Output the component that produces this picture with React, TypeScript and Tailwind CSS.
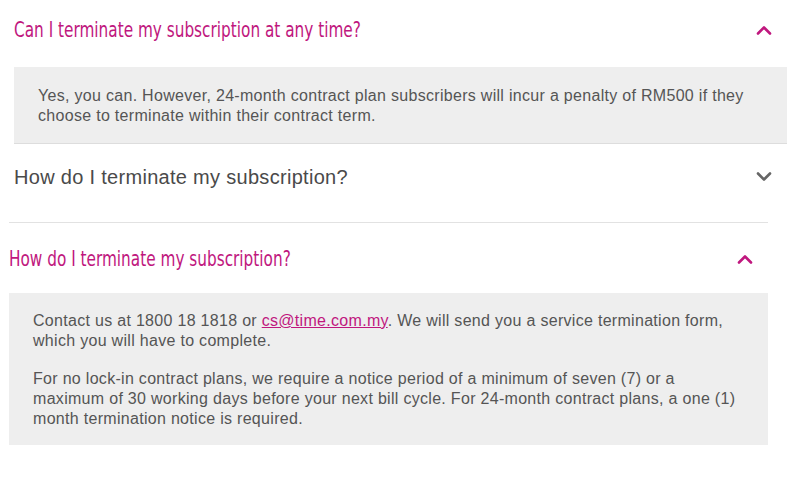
import React from "react";

const Up = ({ color }: { color: string }) => (
  <svg width="16" height="10" viewBox="0 0 16 10" fill="none">
    <path d="M2 8.5 L8 2.5 L14 8.5" stroke={color} strokeWidth="2.6" strokeLinecap="round" strokeLinejoin="round" />
  </svg>
);
const Down = ({ color }: { color: string }) => (
  <svg width="16" height="10" viewBox="0 0 16 10" fill="none">
    <path d="M2 1.5 L8 7.5 L14 1.5" stroke={color} strokeWidth="2.6" strokeLinecap="round" strokeLinejoin="round" />
  </svg>
);

const title =
  "inline-block origin-left scale-x-[0.81] whitespace-nowrap font-['DejaVu_Sans_Condensed','Liberation_Sans',sans-serif] text-[21px] text-[#c0177e] leading-none";
const body =
  "font-['Liberation_Sans',Arial,sans-serif] text-[16px] tracking-[0.3px] leading-[20px] text-[#555]";

export default function App() {
  return (
    <div className="w-[800px] h-[481px] bg-white overflow-hidden">
      <div className="ml-[14px] w-[773px]">
        <div className="h-[67px] flex items-center justify-between pb-[7px]">
          <span className={title}>Can I terminate my subscription at any time?</span>
          <span className="mr-[15px]"><Up color="#c0177e" /></span>
        </div>
        <div className={`bg-[#eeeeee] border-b border-[#dddddd] pl-[24px] pr-[24px] pt-[19px] pb-[17px] ${body}`}>
          Yes, you can. However, 24-month contract plan subscribers will incur a penalty of RM500 if they choose to terminate within their contract term.
        </div>
        <div className="h-[78px] w-[759px] flex items-center justify-between pb-[12px]">
          <span className="font-['Liberation_Sans',Arial,sans-serif] text-[20px] tracking-[0.3px] text-[#4a4a4a] leading-none">
            How do I terminate my subscription?
          </span>
          <span className="mr-[1px]"><Down color="#666666" /></span>
        </div>
      </div>
      <div className="ml-[9px] w-[759px] border-t border-[#e2e2e2]">
        <div className="h-[70px] flex items-center justify-between pt-[2px]">
          <span className={title}>How do I terminate my subscription?</span>
          <span className="mr-[15px]"><Up color="#c0177e" /></span>
        </div>
        <div className={`bg-[#eeeeee] pl-[24px] pr-[24px] pt-[18px] pb-[16px] ${body}`}>
          <p>
            Contact us at 1800 18 1818 or{" "}
            <a className="text-[#c0177e] underline">cs@time.com.my</a>. We will send you a service termination form, which you will have to complete.
          </p>
          <p className="mt-[18px]">
            For no lock-in contract plans, we require a notice period of a minimum of seven (7) or a maximum of 30 working days before your next bill cycle. For 24-month contract plans, a one (1) month termination notice is required.
          </p>
        </div>
      </div>
    </div>
  );
}
